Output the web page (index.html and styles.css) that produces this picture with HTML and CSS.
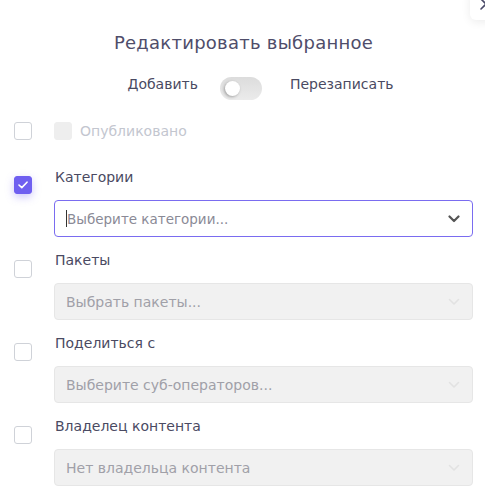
FILE: index.html
```html
<!DOCTYPE html>
<html lang="ru">
<head>
<meta charset="utf-8">
<link rel="stylesheet" href="styles.css">
</head>
<body>
<div class="modal">
  <button class="close" aria-label="Закрыть">
    <svg width="12" height="12" viewBox="0 0 12 12"><path d="M1 1 L11 11 M11 1 L1 11" stroke="#4a4a68" stroke-width="1.6" stroke-linecap="round" fill="none"/></svg>
  </button>
  <h2 class="title">Редактировать выбранное</h2>
  <div class="mode">
    <span class="mode-label">Добавить</span>
    <span class="toggle"><span class="knob"></span></span>
    <span class="mode-label mode-right">Перезаписать</span>
  </div>

  <div class="row row-pub">
    <span class="cb"></span>
    <div class="pub">
      <span class="cb cb-disabled"></span>
      <span class="pub-label">Опубликовано</span>
    </div>
  </div>

  <div class="row">
    <span class="cb cb-checked">
      <svg width="10" height="8" viewBox="0 0 10 8"><path d="M1 4 L3.8 6.6 L9 1.2" stroke="#fff" stroke-width="1.6" fill="none" stroke-linecap="round" stroke-linejoin="round"/></svg>
    </span>
    <div class="field">
      <div class="label">Категории</div>
      <div class="select active">
        <span class="caret"></span><span class="ph">Выберите категории...</span>
        <svg class="chev" width="12" height="8" viewBox="0 0 12 8"><path d="M1.5 1.5 L6 6 L10.5 1.5" stroke="#555" stroke-width="2.2" fill="none" stroke-linecap="round" stroke-linejoin="round"/></svg>
      </div>
    </div>
  </div>

  <div class="row">
    <span class="cb"></span>
    <div class="field">
      <div class="label">Пакеты</div>
      <div class="select disabled">
        <span class="ph">Выбрать пакеты...</span>
        <svg class="chev" width="12" height="8" viewBox="0 0 12 8"><path d="M1.5 1.5 L6 6 L10.5 1.5" stroke="#e2e2e2" stroke-width="1.6" fill="none" stroke-linecap="round" stroke-linejoin="round"/></svg>
      </div>
    </div>
  </div>

  <div class="row">
    <span class="cb"></span>
    <div class="field">
      <div class="label">Поделиться с</div>
      <div class="select disabled">
        <span class="ph">Выберите суб-операторов...</span>
        <svg class="chev" width="12" height="8" viewBox="0 0 12 8"><path d="M1.5 1.5 L6 6 L10.5 1.5" stroke="#e2e2e2" stroke-width="1.6" fill="none" stroke-linecap="round" stroke-linejoin="round"/></svg>
      </div>
    </div>
  </div>

  <div class="row">
    <span class="cb"></span>
    <div class="field">
      <div class="label">Владелец контента</div>
      <div class="select disabled">
        <span class="ph">Нет владельца контента</span>
        <svg class="chev" width="12" height="8" viewBox="0 0 12 8"><path d="M1.5 1.5 L6 6 L10.5 1.5" stroke="#e2e2e2" stroke-width="1.6" fill="none" stroke-linecap="round" stroke-linejoin="round"/></svg>
      </div>
    </div>
  </div>
</div>
</body>
</html>
```
FILE: styles.css
```css
* { box-sizing: border-box; }
html, body { margin: 0; padding: 0; background: #fff; overflow: hidden; }
body {
  font-family: "DejaVu Sans", "Open Sans", sans-serif;
  color: #4a4a62;
  width: 485px;
  height: 491px;
}
.modal {
  position: relative;
  padding: 30px 12px 0 14px;
}
.close {
  position: absolute;
  left: 470px;
  top: -12px;
  width: 32px;
  height: 32px;
  border: none;
  border-radius: 6px;
  background: #fff;
  box-shadow: 0 2px 10px rgba(0,0,0,0.08);
  padding: 0;
  display: flex;
  align-items: center;
  justify-content: center;
}
.title {
  margin: 0;
  font-weight: 400;
  font-size: 18px;
  letter-spacing: 0.25px;
  line-height: 26px;
  text-align: center;
  color: #4f4d6a;
}
.mode {
  display: flex;
  align-items: flex-start;
  justify-content: center;
  gap: 22px;
  margin-top: 21px;
  padding-left: 34px;
  height: 23px;
}
.mode-right { margin-left: 6px; }
.mode-label { font-size: 14px; line-height: 15px; color: #4a4a62; }
.toggle {
  width: 42px;
  height: 23px;
  border-radius: 12px;
  background: linear-gradient(#dcdcdc, #ebebeb);
  position: relative;
  display: inline-block;
}
.knob {
  position: absolute;
  left: 5px;
  top: 4px;
  width: 15px;
  height: 15px;
  border-radius: 50%;
  background: #fff;
  box-shadow: -1px 1px 3px rgba(0,0,0,0.3);
}
.row {
  display: flex;
  gap: 22px;
  margin-top: 14px;
}
.row-pub {
  margin-top: 22px;
  height: 18px;
  align-items: center;
  margin-bottom: 28px;
}
.cb {
  flex: none;
  width: 18px;
  height: 18px;
  border: 1px solid #cfd2d8;
  border-radius: 3px;
  background: #fff;
  display: inline-flex;
  align-items: center;
  justify-content: center;
  margin-top: 9px;
}
.row-pub .cb { margin-top: 0; }
.cb-checked {
  margin-top: 8px;
  background: #6f5ff0;
  border-color: #6f5ff0;
  box-shadow: 0 3px 8px rgba(111,95,240,0.35);
}
.cb-disabled {
  background: #eeeeee;
  border-color: #eeeeee;
}
.pub { display: flex; align-items: center; gap: 8px; }
.pub-label { font-size: 14px; color: #c3c6cf; }
.field { flex: 1; }
.label {
  font-size: 14px;
  line-height: 18px;
  color: #4a4a62;
  padding-left: 1px;
}
.select {
  margin-top: 14px;
  height: 37px;
  border-radius: 4px;
  display: flex;
  align-items: center;
  padding: 0 12px 0 11px;
  font-size: 14px;
}
.select .ph { flex: 1; }
.active {
  border: 1px solid #7a6cf0;
  color: #8a8a96;
}
.active .ph { font-size: 13.5px; }
.caret {
  width: 1px;
  height: 17px;
  background: #333;
}
.disabled {
  background: #f1f1f1;
  border: 1px solid #e6e6e6;
  color: #a0a0a8;
}
```
